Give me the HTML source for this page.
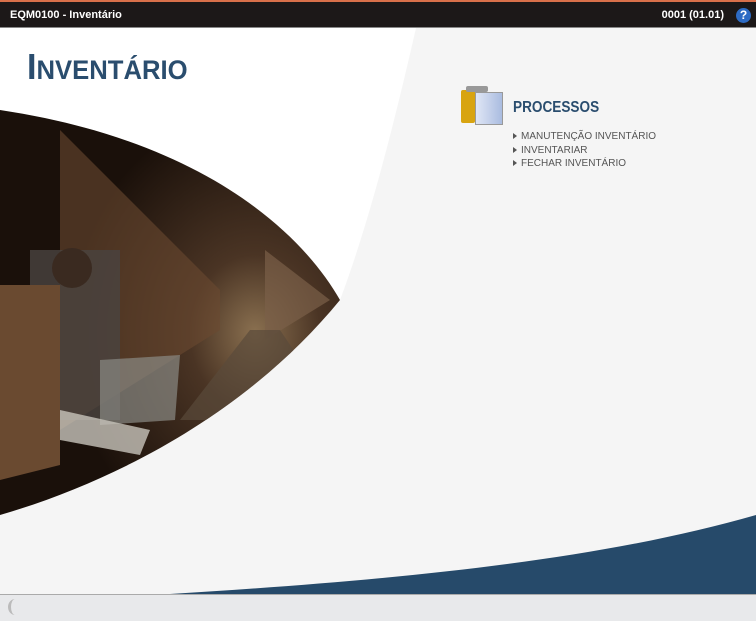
<!DOCTYPE html>
<html><head><meta charset="utf-8"><style>
body{margin:0;width:756px;height:620px;overflow:hidden;background:#f5f5f5;font-family:"Liberation Sans",sans-serif;position:relative}
.hdr{position:absolute;left:0;top:0;width:756px;height:28px;background:#1c1818;border-top:2px solid #d9704a;box-sizing:border-box;border-bottom:1px solid #888}
.hdr span{position:absolute;top:7px;color:#fff;font-size:11px;font-weight:bold}
.q{position:absolute;right:5px;top:6px;width:15px;height:15px;border-radius:50%;background:#2d6bc4;color:#fff;font-size:12px;font-weight:bold;text-align:center;line-height:15px}
.title{position:absolute;left:27px;top:46px;color:#2a4d6e;font-weight:bold;font-size:36px;transform:scaleX(.95);transform-origin:left}
.title small{font-size:27px}
.proc{position:absolute;left:513px;top:99px;color:#2a4d6e;font-weight:bold;font-size:16px;transform:scaleX(.85);transform-origin:left}
.items{position:absolute;left:513px;top:130px;font-size:10px;color:#555;line-height:13.5px}
.items div:before{content:"";display:inline-block;border-left:4px solid #555;border-top:3px solid transparent;border-bottom:3px solid transparent;margin-right:4px}
.foot{position:absolute;left:0;top:594px;width:756px;height:26px;background:#e8e9eb;border-top:1px solid #aaa}
</style></head><body>
<svg width="756" height="620" style="position:absolute;left:0;top:0">
<defs>
<radialGradient id="g" cx="0.75" cy="0.55" r="0.55">
<stop offset="0" stop-color="#8a7050"/><stop offset="0.35" stop-color="#4a3424"/><stop offset="1" stop-color="#1a100a"/>
</radialGradient>
<clipPath id="c"><path d="M0 110 C200 140 300 230 340 300 C250 410 120 480 0 515 Z"/></clipPath>
</defs>
<path d="M0 28 L416 28 C395 120 370 220 340 300 C300 230 200 140 0 110 Z" fill="#fff"/>
<path d="M0 110 C200 140 300 230 340 300 C250 410 120 480 0 515 Z" fill="url(#g)"/>
<g clip-path="url(#c)">
<path d="M60 130 L220 290 L220 330 L60 430 Z" fill="#6a4a30" opacity=".6"/>
<path d="M265 250 L330 300 L265 340 Z" fill="#7a6048" opacity=".7"/>
<path d="M180 420 L250 330 L280 330 L340 420 Z" fill="#5a4a3a" opacity=".7"/>
<rect x="30" y="250" width="90" height="170" fill="#4a4440" opacity=".8"/>
<circle cx="72" cy="268" r="20" fill="#3a2a20"/>
<path d="M100 360 L180 355 L175 420 L100 425 Z" fill="#8a8a84" opacity=".7"/>
<path d="M60 410 L150 430 L140 455 L60 440 Z" fill="#c8c4bc" opacity=".8"/>
<path d="M0 285 L60 285 L60 465 L0 480 Z" fill="#6a4a30"/>
</g>
<path d="M170 594 C400 580 600 560 756 515 L756 594 Z" fill="#264a6a"/>
</svg>
<div class="hdr"><span style="left:10px">EQM0100 - Inventário</span><span style="right:32px">0001 (01.01)</span><div class="q">?</div></div>
<div class="title">I<small>NVENTÁRIO</small></div>
<div style="position:absolute;left:461px;top:90px;width:14px;height:33px;background:#d8a410;border-radius:2px"></div>
<div style="position:absolute;left:475px;top:92px;width:26px;height:31px;background:linear-gradient(90deg,#dfe6f5,#aabce0);border:1px solid #999"></div>
<div style="position:absolute;left:466px;top:86px;width:22px;height:6px;background:#999;border-radius:2px"></div>
<div class="proc">PROCESSOS</div>
<div class="items"><div>MANUTENÇÃO INVENTÁRIO</div><div>INVENTARIAR</div><div>FECHAR INVENTÁRIO</div></div>
<div class="foot"><div style="position:absolute;left:8px;top:4px;width:14px;height:16px;border-radius:50%;border-left:3px solid #bbb;box-sizing:border-box"></div></div>
</body></html>
